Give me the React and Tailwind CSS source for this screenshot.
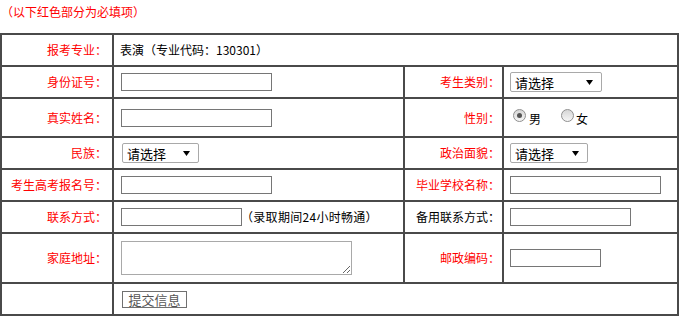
import React from "react";

const Label = ({ children, black, pr = "pr-[5px]" }) => (
  <div className={`bg-white flex items-center justify-end ${pr} ${black ? "text-black" : "text-[#ff0000]"}`}>
    {children}
  </div>
);

const Input = ({ w }) => (
  <div className={`${w} h-[18px] border border-[#767676] bg-white shrink-0`} />
);

const Select = ({ w }) => (
  <div className={`${w} h-[20px] border border-[#a9a9a9] rounded-[2px] bg-white flex items-center justify-between pl-[4px] pr-[8px] text-[13px] text-black shrink-0`}>
    <span className="leading-[13px]">请选择</span>
    <svg width="7" height="5" viewBox="0 0 7 5">
      <polygon points="0,0 7,0 3.5,5" fill="#000" />
    </svg>
  </div>
);

const Radio = ({ checked }) => (
  <span className="relative block w-[13px] h-[13px] rounded-full border border-[#8f8f8f] bg-linear-to-b from-[#d6d6d6] to-[#f6f6f6] shrink-0">
    {checked && (
      <span className="absolute left-[3px] top-[3px] w-[5px] h-[5px] rounded-full bg-[#555]" />
    )}
  </span>
);

const Cell = ({ children, className = "" }) => (
  <div className={`bg-white flex items-center ${className}`}>{children}</div>
);

export default function App() {
  return (
    <div className="w-[683px] h-[318px] bg-white text-[12px] text-black font-['Noto_Sans_CJK_SC',sans-serif]">
      <div className="h-[33px] leading-[24px] text-[#ff0000] pl-[1px]">（以下红色部分为必填项）</div>
      <div className="grid w-[679px] grid-cols-[110px_289px_97px_173px] grid-rows-[30px_30px_37px_30px_30px_30px_48px_30px] gap-[2px] p-[2px] bg-[#4a4a4a]">
        {/* row 1 */}
        <Label>报考专业：</Label>
        <Cell className="col-span-3 pl-[6px]">表演（专业代码：130301）</Cell>

        {/* row 2 */}
        <Label>身份证号：</Label>
        <Cell className="pl-[7px]"><Input w="w-[151px]" /></Cell>
        <Label pr="pr-[2px]">考生类别：</Label>
        <Cell className="pl-[6px]"><Select w="w-[92px]" /></Cell>

        {/* row 3 */}
        <Label>真实姓名：</Label>
        <Cell className="pl-[7px]"><Input w="w-[151px]" /></Cell>
        <Label pr="pr-[2px]">性别：</Label>
        <div className="bg-white flex items-start pl-[9px]">
          <span className="mt-[10px]"><Radio checked /></span>
          <span className="ml-[3px] mt-[13px] leading-[13px]">男</span>
          <span className="ml-[20px] mt-[10px]"><Radio /></span>
          <span className="ml-[2px] mt-[13px] leading-[13px]">女</span>
        </div>

        {/* row 4 */}
        <Label>民族：</Label>
        <Cell className="pl-[8px]"><Select w="w-[77px]" /></Cell>
        <Label pr="pr-[2px]">政治面貌：</Label>
        <Cell className="pl-[6px]"><Select w="w-[78px]" /></Cell>

        {/* row 5 */}
        <Label>考生高考报名号：</Label>
        <Cell className="pl-[7px]"><Input w="w-[151px]" /></Cell>
        <Label pr="pr-[2px]">毕业学校名称：</Label>
        <Cell className="pl-[6px]"><Input w="w-[151px]" /></Cell>

        {/* row 6 */}
        <Label>联系方式：</Label>
        <Cell className="pl-[7px]">
          <Input w="w-[121px]" />
          <span className="ml-[-1px] whitespace-nowrap tracking-[0.3px]">（录取期间24小时畅通）</span>
        </Cell>
        <Label black pr="pr-[2px]">备用联系方式：</Label>
        <Cell className="pl-[6px]"><Input w="w-[121px]" /></Cell>

        {/* row 7 */}
        <Label>家庭地址：</Label>
        <Cell className="pl-[7px]">
          <textarea className="block w-[231px] h-[34px] border border-[#a9a9a9] bg-white resize-y outline-none" />
        </Cell>
        <Label pr="pr-[2px]">邮政编码：</Label>
        <Cell className="pl-[6px]"><Input w="w-[91px]" /></Cell>

        {/* row 8 */}
        <div className="bg-white" />
        <Cell className="col-span-3 pl-[8px]">
          <div className="w-[65px] h-[17px] border border-[#707070] bg-white text-[13px] text-[#555] flex items-center justify-center leading-[13px]">
            提交信息
          </div>
        </Cell>
      </div>
    </div>
  );
}
